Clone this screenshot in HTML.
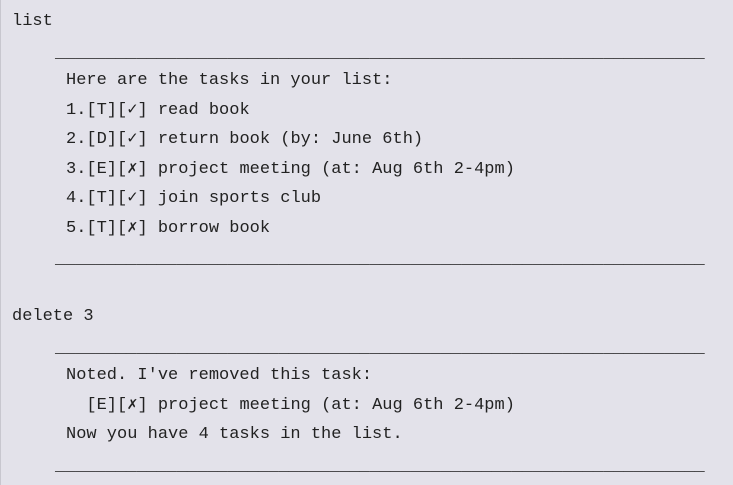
<html><head><style>
body{margin:0;width:733px;height:485px;background:#e3e2ea;overflow:hidden;border-left:1px solid #c8c7cf;box-sizing:border-box}
.w{padding-top:7px;font-family:"Liberation Mono","DejaVu Sans Mono",monospace;font-size:17px;line-height:29.5px;color:#222}
.w>div{height:29.5px;white-space:pre}
.a{padding-left:11px}.s{padding-left:54px;position:relative;top:2px;letter-spacing:-0.05px}.t{padding-left:65px}
</style></head><body><div class="w"><div class="a">list</div><div class="s">________________________________________________________________</div><div class="t">Here are the tasks in your list:</div><div class="t">1.[T][✓] read book</div><div class="t">2.[D][✓] return book (by: June 6th)</div><div class="t">3.[E][✗] project meeting (at: Aug 6th 2-4pm)</div><div class="t">4.[T][✓] join sports club</div><div class="t">5.[T][✗] borrow book</div><div class="s">________________________________________________________________</div><div class="a"> </div><div class="a">delete 3</div><div class="s">________________________________________________________________</div><div class="t">Noted. I've removed this task:</div><div class="t">  [E][✗] project meeting (at: Aug 6th 2-4pm)</div><div class="t">Now you have 4 tasks in the list.</div><div class="s">________________________________________________________________</div></div></body></html>
